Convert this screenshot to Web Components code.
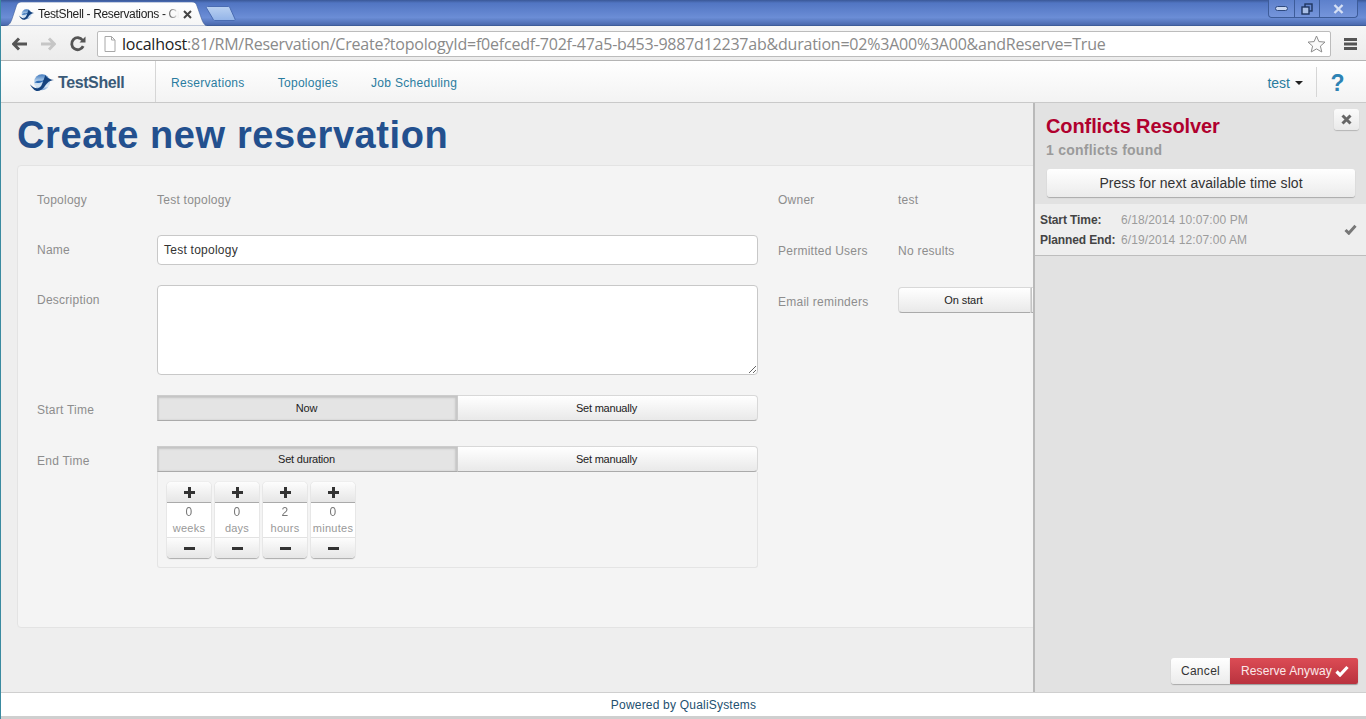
<!DOCTYPE html>
<html>
<head>
<meta charset="utf-8">
<title>TestShell - Reservations - Create</title>
<style>
html, body { margin: 0; height: 100%; overflow: hidden; }
body { display: flex; flex-direction: column; box-sizing: border-box; border-left: 1px solid #3a8aa0; font: 12px "Liberation Sans", Arial, sans-serif; background: #cfcfcf; }
</style>
</head>
<body>
<browser-chrome url-host="localhost" url-rest=":81/RM/Reservation/Create?topologyId=f0efcedf-702f-47a5-b453-9887d12237ab&amp;duration=02%3A00%3A00&amp;andReserve=True" tab-title="TestShell - Reservations - Cr"></browser-chrome>
<app-header></app-header>
<app-main>
  <reservation-form slot="content"></reservation-form>
  <conflicts-panel slot="panel"></conflicts-panel>
</app-main>
<app-footer>Powered by QualiSystems</app-footer>

<script>
const LOGO = (w, h) => `<svg width="${w}" height="${h}" viewBox="0 0 24 17" style="flex:none">
  <defs><linearGradient id="lg" x1="0" y1="0" x2="0" y2="1"><stop offset="0" stop-color="#3f78bd"/><stop offset=".45" stop-color="#b9d4ee"/><stop offset=".75" stop-color="#dbe9f6"/><stop offset="1" stop-color="#6d9ad0"/></linearGradient></defs>
  <circle cx="12" cy="8.2" r="8" fill="url(#lg)"/>
  <path d="M4.6 8.6C8 4.6 12 9 15.5 4.2C14.5 8.4 9 9.5 4.6 8.6Z" fill="#2f6cb4"/>
  <path d="M0 10.2C2.6 12.8 5 14.6 7.8 14.3C12 13.9 13 6.6 15.4 1C16.2 3.4 20 5.6 24 6C19.5 6.4 17.4 8.6 15 12C12.8 15.4 10 17 7.6 17C4.6 17 2 14 0 10.2Z" fill="#14427e"/>
</svg>`;

class BrowserChrome extends HTMLElement {
  constructor() {
    super();
    this.attachShadow({ mode: 'open' });
  }
  connectedCallback() {
    this.shadowRoot.innerHTML = `
    <style>
      :host { display: block; flex: none; font-family: "Liberation Sans", Arial, sans-serif; }
      .strip { height: 26px; box-sizing: border-box; background: linear-gradient(#3a5897 0, #5175c2 3px, #6b8dd6 70%, #4a69ae 100%); border-bottom: 1px solid #3d5c99; display: flex; justify-content: space-between; padding-left: 3px; }
      .tabs { display: flex; align-items: flex-end; }
      .tabwrap { position: relative; width: 204px; height: 24px; margin-bottom: -1px; }
      .tabwrap > svg { position: absolute; left: 0; top: 0; }
      .tabinner { position: absolute; inset: 0; display: flex; align-items: center; padding: 0 0 0 15px; gap: 4px; font-size: 12px; color: #222; }
      .tabinner span { flex: none; width: 141px; white-space: nowrap; letter-spacing: -.35px; -webkit-mask-image: linear-gradient(to right, #000 90%, transparent 100%); mask-image: linear-gradient(to right, #000 90%, transparent 100%); }
      .newtab { margin: 0 0 4px -3px; display: block; }
      .win { display: flex; height: 17px; margin-right: 8px; border: 1px solid #3d5c99; border-top: 0; border-radius: 0 0 4px 4px; }
      .win div { display: flex; align-items: center; justify-content: center; height: 17px; border-left: 1px solid #3d5c99; background: linear-gradient(#5d80cb, #7595db); }
      .win div:first-child { border-left: 0; border-radius: 0 0 0 4px; width: 25px; }
      .win div:nth-child(2) { width: 24px; }
      .win div:last-child { width: 37px; border-radius: 0 0 4px 0; }
      .bar { height: 35px; box-sizing: border-box; background: linear-gradient(#f6f6f6, #ececec); border-bottom: 1px solid #b4b4b4; display: flex; align-items: center; padding: 2px 9px 0 11px; }
      .nav { display: flex; align-items: center; gap: 14px; width: 85px; flex: none; }
      .omni { flex: 1; height: 26px; margin-right: 13px; box-sizing: border-box; background: #fff; border: 1px solid #bcbcbc; border-radius: 2px; display: flex; align-items: center; padding: 0 4px 0 6px; gap: 6px; min-width: 0; }
      .url { flex: 1; font: 16px "Open Sans", "Liberation Sans", sans-serif; letter-spacing: -.22px; color: #8a8a8a; white-space: nowrap; overflow: hidden; }
      .url b { font-weight: 400; color: #222; }
    </style>
    <div class="strip">
      <div class="tabs">
        <div class="tabwrap">
          <svg width="204" height="24" viewBox="0 0 204 24"><defs><linearGradient id="tg" x1="0" y1="0" x2="0" y2="1"><stop offset="0" stop-color="#fff"/><stop offset="1" stop-color="#f5f5f5"/></linearGradient></defs><path d="M0 24C6 24 7 20 9 14L12 5C13 1 15 0 18 0H188C191 0 192 1 193 4L198 18C200 23 202 24 204 24Z" fill="url(#tg)" stroke="#3d5c99" stroke-width=".6"/></svg>
          <div class="tabinner">${LOGO(15, 11)}<span>${this.getAttribute('tab-title')}</span>
            <svg width="9" height="9" viewBox="0 0 9 9" style="flex:none"><path d="M1 1L8 8M8 1L1 8" stroke="#444" stroke-width="2"/></svg>
          </div>
        </div>
        <svg class="newtab" width="31" height="15" viewBox="0 0 31 15"><defs><linearGradient id="ng" x1="0" y1="0" x2="0" y2="1"><stop offset="0" stop-color="#bad1f1"/><stop offset="1" stop-color="#93b4e8"/></linearGradient></defs><path d="M2.5 .5H23C24 .5 24.5 1 25 2L30 13C30.3 14 30 14.5 29 14.5H10C9 14.5 8.5 14 8 13L1.5 2C1 1 1.500 .5 2.5 .5Z" fill="url(#ng)" stroke="#4a6cb2"/></svg>
      </div>
      <div class="win">
        <div><svg width="13" height="5" viewBox="0 0 13 5"><rect x=".5" y=".5" width="12" height="4" rx="2" fill="#c9d7f0" stroke="#2f4a80"/></svg></div>
        <div><svg width="12" height="12" viewBox="0 0 12 12"><rect x="4" y="1" width="7" height="7" fill="none" stroke="#1f3560" stroke-width="1.4"/><rect x="1" y="4" width="7" height="7" fill="#a9bfe6" stroke="#1f3560" stroke-width="1.4"/></svg></div>
        <div><svg width="11" height="10" viewBox="0 0 11 10"><path d="M1.5 1L9.5 9M9.5 1L1.5 9" stroke="#d6e0f4" stroke-width="2.4"/></svg></div>
      </div>
    </div>
    <div class="bar">
      <div class="nav">
        <svg width="15" height="14" viewBox="0 0 15 14"><path d="M7 1.5L1.5 7L7 12.5M2 7H15" fill="none" stroke="#555" stroke-width="3"/></svg>
        <svg width="15" height="14" viewBox="0 0 15 14"><path d="M8 1.5L13.5 7L8 12.5M13 7H0" fill="none" stroke="#c6c6c6" stroke-width="3"/></svg>
        <svg width="16" height="16" viewBox="0 0 16 16"><path d="M13.2 10.2A6 6 0 1 1 12.6 4.2" fill="none" stroke="#555" stroke-width="2.8"/><path d="M9.5 6.5H15.5V0.5Z" fill="#555"/></svg>
      </div>
      <div class="omni">
        <svg width="12" height="16" viewBox="0 0 12 16" style="flex:none"><path d="M1 .5H7.5L11 4V15.5H1Z M7.5 .5V4H11" fill="#fff" stroke="#a8a8a8"/></svg>
        <div class="url"><b>${this.getAttribute('url-host')}</b>${this.getAttribute('url-rest').replace(/&/g, '&amp;')}</div>
        <svg width="19" height="18" viewBox="0 0 19 18" style="flex:none"><path d="M9.5 1L11.9 6.6L18 7.1L13.4 11.1L14.8 17L9.5 13.9L4.2 17L5.6 11.1L1 7.1L7.1 6.6Z" fill="#fafafa" stroke="#8d8d8d"/></svg>
      </div>
      <svg width="13" height="12" viewBox="0 0 13 12" style="flex:none"><path d="M0 0H13V3H0ZM0 4.5H13V7.5H0ZM0 9H13V12H0Z" fill="#555"/></svg>
    </div>`;
  }
}
customElements.define('browser-chrome', BrowserChrome);

class AppHeader extends HTMLElement {
  constructor() {
    super();
    this.attachShadow({ mode: 'open' });
    this.shadowRoot.innerHTML = `
    <style>
      :host { display: flex; flex: none; height: 42px; box-sizing: border-box; background: linear-gradient(#fff, #f3f3f3); border-bottom: 1px solid #c9c9c9; align-items: stretch; }
      .brand { width: 155px; box-sizing: border-box; border-right: 1px solid #d6d6d6; display: flex; align-items: center; padding: 2px 0 0 29px; gap: 4px; }
      .brand span { font-size: 16px; font-weight: bold; color: #3a5a78; letter-spacing: -.4px; }
      nav { display: flex; align-items: center; gap: 33px; padding: 2px 0 0 15px; flex: 1; }
      nav a { color: #2a7c9f; letter-spacing: .3px; }
      .user { display: flex; align-items: center; gap: 5px; color: #2a7c9f; font-size: 14px; padding: 3px 13px 0 0; height: 30px; box-sizing: border-box; align-self: center; border-right: 1px solid #d6d6d6; }
      .caret { border: 4px solid transparent; border-top-color: #222; border-bottom: 0; }
      .help { width: 49px; box-sizing: border-box; padding: 4px 8px 0 0; display: flex; align-items: center; justify-content: center; font-size: 23px; font-weight: bold; color: #2e83b4; }
    </style>
    <div class="brand">${LOGO(24, 17)}<span>TestShell</span></div>
    <nav><a>Reservations</a><a>Topologies</a><a>Job Scheduling</a></nav>
    <div class="user">test<i class="caret"></i></div>
    <div class="help">?</div>`;
  }
}
customElements.define('app-header', AppHeader);

class AppMain extends HTMLElement {
  constructor() {
    super();
    this.attachShadow({ mode: 'open' });
    this.shadowRoot.innerHTML = `
    <style>
      :host { display: flex; flex: none; height: 589px; background: #eeeeee; overflow: hidden; box-sizing: border-box; }
      .left { flex: 1; min-width: 0; overflow: hidden; }
      .right { width: 333px; flex: none; display: flex; }
    </style>
    <div class="left"><slot name="content"></slot></div>
    <div class="right"><slot name="panel"></slot></div>`;
  }
}
customElements.define('app-main', AppMain);

class SegToggle extends HTMLElement {
  constructor() {
    super();
    this.attachShadow({ mode: 'open' });
    this.shadowRoot.innerHTML = `
    <style>
      :host { display: flex; height: 26px; color: #222; font-size: 11px; }
      div { flex: 1 1 0; display: flex; align-items: center; justify-content: center; box-sizing: border-box; border: 1px solid #d8d8d8; border-bottom: 1px solid #aaa; background: linear-gradient(#fff, #e9e9e9); letter-spacing: -.2px; padding-right: 2px; }
      div:first-child { border-radius: 4px 0 0 4px; }
      div:last-child { border-radius: 0 4px 4px 0; border-left: 0; }
      div.on { background: #e4e4e4; box-shadow: inset 0 2px 2px #c4c4c4, inset -2px 0 2px #c8c8c8, inset 1px 0 1px #d0d0d0; border-color: #ccc; border-bottom-color: #aaa; }
    </style>
    <div class="on"></div><div></div>`;
  }
  connectedCallback() {
    const parts = this.shadowRoot.querySelectorAll('div');
    parts[0].textContent = this.getAttribute('first');
    parts[1].textContent = this.getAttribute('second');
  }
}
customElements.define('seg-toggle', SegToggle);

class DurationCell extends HTMLElement {
  constructor() {
    super();
    this.attachShadow({ mode: 'open' });
    this.shadowRoot.innerHTML = `
    <style>
      :host { display: flex; flex-direction: column; width: 44px; height: 76px; font-size: 11px; box-sizing: border-box; color: #999; text-align: center; background: #fff; border-radius: 4px; box-shadow: 0 1px 1px #aaa, 0 0 1px #bbb; }
      .btn { display: flex; align-items: center; justify-content: center; background: linear-gradient(#fdfdfd, #e6e6e6); flex: none; }
      .plus { height: 20px; border-bottom: 1px solid #aaa; border-radius: 4px 4px 0 0; }
      .minus { height: 20px; border-top: 1px solid #e2e2e2; border-radius: 0 0 4px 4px; }
      .vals { flex: 1; display: flex; flex-direction: column; justify-content: center; line-height: 16px; }
      .num { color: #777; font-size: 12px; will-change: transform; }
    </style>
    <div class="btn plus"><svg width="11" height="11" viewBox="0 0 11 11"><path d="M4 0H7V4H11V7H7V11H4V7H0V4H4Z" fill="#333"/></svg></div>
    <div class="vals"><span class="num"></span><span class="unit"></span></div>
    <div class="btn minus"><svg width="11" height="3" viewBox="0 0 11 3"><rect width="11" height="3" fill="#333"/></svg></div>`;
  }
  connectedCallback() {
    this.shadowRoot.querySelector('.num').textContent = this.getAttribute('value');
    this.shadowRoot.querySelector('.unit').textContent = this.getAttribute('unit');
  }
}
customElements.define('duration-cell', DurationCell);

class FormRow extends HTMLElement {
  constructor() {
    super();
    this.attachShadow({ mode: 'open' });
    this.shadowRoot.innerHTML = `
    <style>
      :host { display: flex; }
      label { flex: none; width: 120px; color: #8d8d8d; letter-spacing: .25px; padding-top: var(--label-top, 0); }
      .value { flex: 1; min-width: 0; color: #8d8d8d; letter-spacing: .25px; padding-top: var(--value-top, 0); }
    </style>
    <label></label><div class="value"><slot></slot></div>`;
  }
  connectedCallback() {
    this.shadowRoot.querySelector('label').textContent = this.getAttribute('label');
  }
}
customElements.define('form-row', FormRow);

class ReservationForm extends HTMLElement {
  constructor() {
    super();
    this.attachShadow({ mode: 'open' });
    this.shadowRoot.innerHTML = `
    <style>
      :host { display: block; padding: 0 0 0 16px; font-size: 12px; }
      h1 { margin: 0; height: 62px; box-sizing: border-box; padding-top: 10px; font-size: 38px; line-height: 44px; font-weight: bold; color: #23508e; white-space: nowrap; letter-spacing: .6px; }
      .card { width: 1100px; height: 463px; box-sizing: border-box; background: #f4f4f4; border: 1px solid #e3e3e3; border-radius: 4px; padding: 26px 19px; display: flex; gap: 20px; }
      .col-l { width: 721px; flex: none; display: flex; flex-direction: column; }
      .col-r { flex: 1; display: flex; flex-direction: column; }
      .t { --label-top: 1px; --value-top: 1px; height: 20px; margin-bottom: 23px; }
      .inp { background: #fff; border: 1px solid #c8c8c8; border-radius: 4px; box-sizing: border-box; color: #333; }
      .name { height: 30px; line-height: 28px; padding-left: 6px; }
      .desc { display: block; width: 100%; height: 90px; resize: vertical; margin: 0; }
      .box { border: 1px solid #e4e4e4; border-top: 0; height: 96px; box-sizing: border-box; display: flex; gap: 4px; padding: 10px 0 0 9px; border-radius: 0 0 3px 3px; }
      .wide { width: 133px; height: 26px; box-sizing: border-box; display: flex; align-items: center; justify-content: center; color: #222; font-size: 11px; letter-spacing: -.1px; padding-right: 2px; background: linear-gradient(#fff, #e9e9e9); border: 1px solid #d8d8d8; border-bottom-color: #aaa; border-radius: 4px 0 0 4px; }
      .rest { display: flex; }
      .rest i { width: 20px; height: 26px; box-sizing: border-box; border: 1px solid #d8d8d8; border-bottom-color: #aaa; border-left-color: #c4c4c4; background: linear-gradient(#fff, #e9e9e9); }
    </style>
    <h1>Create new reservation</h1>
    <div class="card">
      <div class="col-l">
        <form-row class="t" label="Topology">Test topology</form-row>
        <form-row label="Name" style="margin-bottom:20px;--label-top:8px"><div class="inp name">Test topology</div></form-row>
        <form-row label="Description" style="margin-bottom:20px;--label-top:8px"><textarea class="inp desc"></textarea></form-row>
        <form-row label="Start Time" style="margin-bottom:25px;--label-top:8px"><seg-toggle first="Now" second="Set manually"></seg-toggle></form-row>
        <form-row label="End Time" style="--label-top:8px">
          <seg-toggle first="Set duration" second="Set manually"></seg-toggle>
          <div class="box">
            <duration-cell value="0" unit="weeks"></duration-cell>
            <duration-cell value="0" unit="days"></duration-cell>
            <duration-cell value="2" unit="hours"></duration-cell>
            <duration-cell value="0" unit="minutes"></duration-cell>
          </div>
        </form-row>
      </div>
      <div class="col-r">
        <form-row class="t" label="Owner" style="margin-bottom:31px">test</form-row>
        <form-row class="t" label="Permitted Users" style="margin-bottom:24px">No results</form-row>
        <form-row label="Email reminders" style="--label-top:8px">
          <div class="rest"><div class="wide">On start</div><i></i></div>
        </form-row>
      </div>
    </div>`;
  }
}
customElements.define('reservation-form', ReservationForm);

class ConflictsPanel extends HTMLElement {
  constructor() {
    super();
    this.attachShadow({ mode: 'open' });
    this.shadowRoot.innerHTML = `
    <style>
      :host { display: flex; flex-direction: column; flex: 1; box-sizing: border-box; background: #e2e2e2; border-left: 2px solid #b9b9b9; position: relative; }
      .close { position: absolute; right: 7px; top: 6px; width: 25px; height: 21px; box-sizing: border-box; display: flex; align-items: center; justify-content: center; background: linear-gradient(#fbfbfb, #e9e9e9); border-radius: 3px; box-shadow: 0 1px 1px #b5b5b5; }
      .head { padding: 12px 11px 0 11px; }
      h2 { margin: 0; font-size: 20px; line-height: 23px; color: #b0002e; font-weight: bold; letter-spacing: -.1px; }
      h3 { margin: 2px 0 0; font-size: 14px; line-height: 20px; color: #9a9a9a; font-weight: bold; letter-spacing: .25px; }
      .next { margin: 9px 0 0 1px; height: 28px; width: 308px; box-sizing: border-box; display: flex; align-items: center; justify-content: center; font-size: 14px; color: #333; background: linear-gradient(#fff, #ebebeb); border-radius: 3px; box-shadow: 0 1px 1px #aaa; letter-spacing: .05px; }
      .slot { margin-top: 7px; height: 52px; box-sizing: border-box; background: #eeeeee; border-bottom: 1px solid #bdbdbd; display: flex; align-items: center; padding: 0 9px 0 5px; }
      .times { flex: 1; display: grid; grid-template-columns: 81px auto; row-gap: 4px; line-height: 16px; }
      .times b { color: #444; letter-spacing: -.1px; }
      .times span { color: #9c9c9c; letter-spacing: .1px; }
      .foot { margin-top: auto; padding: 0 8px 8px 0; display: flex; justify-content: flex-end; }
      .foot div { height: 26px; display: flex; align-items: center; box-sizing: border-box; }
      .cancel { width: 59px; justify-content: center; letter-spacing: .3px; color: #333; background: linear-gradient(#fff, #ebebeb); border-radius: 3px 0 0 3px; box-shadow: 0 1px 1px #aaa; }
      .go { width: 128px; gap: 3px; padding-left: 11px; letter-spacing: .1px; color: #fbe9ea; background: linear-gradient(#dc4c55, #b9323e); border-radius: 0 2px 2px 0; box-shadow: 0 1px 1px #999; }
    </style>
    <div class="close"><svg width="11" height="11" viewBox="0 0 11 11"><path d="M1.5 1.5L9.5 9.5M9.5 1.5L1.5 9.5" stroke="#666" stroke-width="3"/></svg></div>
    <div class="head">
      <h2>Conflicts Resolver</h2>
      <h3>1 conflicts found</h3>
      <div class="next">Press for next available time slot</div>
    </div>
    <div class="slot">
      <div class="times">
        <b>Start Time:</b><span>6/18/2014 10:07:00 PM</span>
        <b>Planned End:</b><span>6/19/2014 12:07:00 AM</span>
      </div>
      <svg width="13" height="11" viewBox="0 0 13 11"><path d="M1.5 6L4.8 9.2L11.5 1.8" fill="none" stroke="#777" stroke-width="3"/></svg>
    </div>
    <div class="foot">
      <div class="cancel">Cancel</div>
      <div class="go">Reserve Anyway <svg width="14" height="12" viewBox="0 0 14 12"><path d="M1.5 6.5L5 10L12.5 2" fill="none" stroke="#fff" stroke-width="3.2"/></svg></div>
    </div>`;
  }
}
customElements.define('conflicts-panel', ConflictsPanel);

class AppFooter extends HTMLElement {
  constructor() {
    super();
    this.attachShadow({ mode: 'open' });
    this.shadowRoot.innerHTML = `
    <style>
      :host { display: flex; flex: none; height: 24px; box-sizing: border-box; background: #fff; border-top: 1px solid #cfcfcf; align-items: center; justify-content: center; color: #23506f; letter-spacing: .2px; }
    </style>
    <slot></slot>`;
  }
}
customElements.define('app-footer', AppFooter);
</script>
</body>
</html>
